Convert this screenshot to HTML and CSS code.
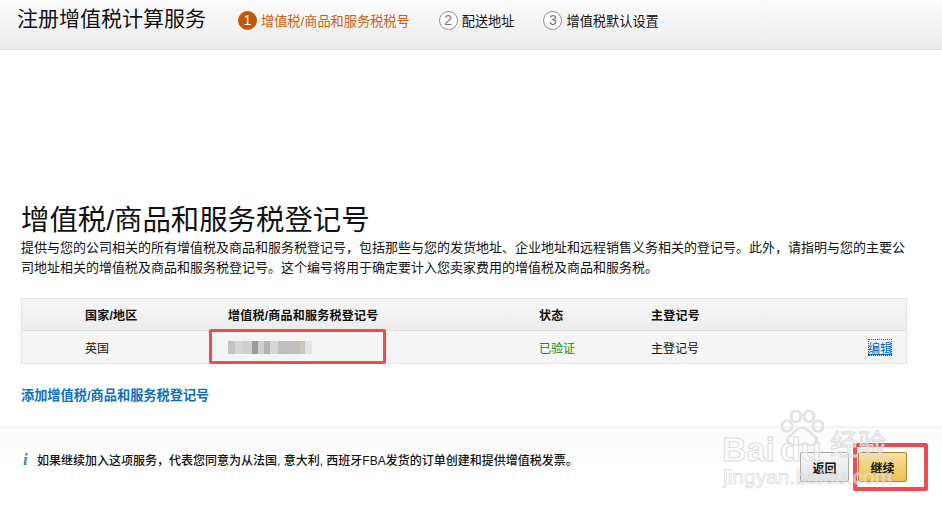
FILE: index.html
```html
<!DOCTYPE html>
<html lang="zh">
<head>
<meta charset="utf-8">
<title>注册增值税计算服务</title>
<link rel="stylesheet" href="styles.css">
</head>
<body>
<header class="top">
  <div class="top-title">注册增值税计算服务</div>
  <ol class="steps">
    <li class="step active"><span class="num">1</span>增值税/商品和服务税税号</li>
    <li class="step"><span class="num">2</span>配送地址</li>
    <li class="step"><span class="num">3</span>增值税默认设置</li>
  </ol>
</header>
<main class="content">
  <h1>增值税/商品和服务税登记号</h1>
  <p class="desc">提供与您的公司相关的所有增值税及商品和服务税登记号，包括那些与您的发货地址、企业地址和远程销售义务相关的登记号。此外，请指明与您的主要公司地址相关的增值税及商品和服务税登记号。这个编号将用于确定要计入您卖家费用的增值税及商品和服务税。</p>
  <div class="table">
    <div class="row head">
      <span>国家/地区</span><span>增值税/商品和服务税登记号</span><span>状态</span><span>主登记号</span><span></span>
    </div>
    <div class="row body">
      <span>英国</span><span><i class="blur"></i></span><span class="ok">已验证</span><span>主登记号</span><a class="edit" href="#">编辑</a>
    </div>
    <div class="mark mark-number"></div>
  </div>
  <a class="add" href="#">添加增值税/商品和服务税登记号</a>
</main>
<footer class="foot">
  <p class="note"><i class="info">i</i>如果继续加入这项服务，代表您同意为从法国, 意大利, 西班牙FBA发货的订单创建和提供增值税发票。</p>
  <div class="actions">
    <button class="btn back">返回</button>
    <button class="btn next">继续</button>
    <div class="mark mark-next"></div>
  </div>
</footer>
<div class="watermark" aria-hidden="true">
  <svg class="paw" width="44" height="40" viewBox="0 0 44 50" preserveAspectRatio="none">
    <g fill="none" stroke="#e2e2e2" stroke-width="3">
      <ellipse cx="7" cy="20" rx="5" ry="7"/>
      <ellipse cx="16" cy="8" rx="5" ry="7"/>
      <ellipse cx="29" cy="8" rx="5" ry="7"/>
      <ellipse cx="38" cy="20" rx="5" ry="7"/>
      <path d="M22 22c-6 0-7 6-12 10-5 5-2 13 5 12 3 0 5-1 7-1s5 1 8 1c6 0 9-7 4-12-5-4-6-10-12-10z"/>
    </g>
  </svg>
  <span class="wm-bai">Bai</span><span class="wm-du">du</span><span class="wm-jy">经验</span>
  <span class="wm-url">jingyan.baidu.com</span>
</div>
</body>
</html>
```
FILE: styles.css
```css
* { box-sizing: border-box; }
html, body { margin: 0; padding: 0; }
body {
  position: relative;
  width: 942px;
  height: 508px;
  overflow: hidden;
  background: #fff;
  color: #111;
  font-family: "Liberation Sans", "Noto Sans CJK SC", sans-serif;
  font-size: 13px;
}
.top {
  display: flex;
  align-items: center;
  height: 50px;
  padding: 0 0 8px 17px;
  background: linear-gradient(#fbfbfb, #ececec);
  border-bottom: 1px solid #d4d4d4;
}
.top-title { font-size: 21px; line-height: 28px; width: 221px; color: #111; margin-top: -3px; }
.steps { display: flex; margin: 0; padding: 0; list-style: none; }
.step { display: flex; align-items: center; font-size: 13.2px; margin-right: 29px; color: #111; }
.step.active { color: #c9620f; }
.num {
  width: 19px;
  height: 19px;
  margin-right: 4px;
  border: 1px solid #8f8f8f;
  border-radius: 50%;
  background: #fff;
  color: #777;
  font-size: 14px;
  line-height: 17px;
  text-align: center;
}
.active .num { background: #c25700; border-color: #c25700; color: #fff; }
.content { padding: 152px 35px 0 21px; }
h1 { margin: 0; font-size: 28.4px; line-height: 36px; font-weight: 400; color: #111; }
.desc { margin: 0; font-size: 13px; line-height: 20px; width: 886px; }
.table {
  position: relative;
  margin-top: 20px;
  width: 886px;
  border: 1px solid #e3e3e3;
}
.row {
  display: grid;
  grid-template-columns: 143px 311px 112px 1fr auto;
  align-items: center;
  padding: 0 14px 0 63px;
  font-size: 12px;
}
.head {
  height: 32px;
  font-weight: 700;
  letter-spacing: .25px;
  background: linear-gradient(#f8f8f8, #ececec);
  border-bottom: 1px solid #dedede;
}
.body { height: 32px; background: #f5f5f5; }
.ok { color: #128c00; }
.edit { color: #0066c0; outline: 1px dotted #0066c0; outline-offset: -1px; }
.blur {
  display: block;
  width: 84px;
  height: 13px;
  background: linear-gradient(90deg,
    #c4c4c8 0 7px, #d6d6d8 7px 14px, #cfcfd1 14px 24px, #9c9a9c 24px 30px,
    #d2cfc9 30px 36px, #b3b3b6 36px 42px, #d6d6d6 42px 50px, #bfbfc3 50px 60px,
    #c2bfc0 60px 72px, #cfc6bb 72px 77px, #dfe5ec 77px 84px);
}
.mark { position: absolute; border: 3px solid #ee4b53; border-radius: 2px; }
.mark-number { left: 187px; top: 30px; width: 177px; height: 35px; }
.add {
  display: block;
  margin-top: 23px;
  font-size: 13.2px;
  line-height: 18px;
  font-weight: 700;
  color: #0a6fc2;
  text-decoration: none;
}
.foot {
  display: flex;
  justify-content: space-between;
  margin-top: 21px;
  height: 82px;
  padding: 26px 35px 0 23px;
  background: linear-gradient(#f1f1f1, #fbfbfb 3px, #fff 40px);
}
.note { margin: 0; font-size: 12px; line-height: 16px; font-weight: 500; color: #111; }
.info {
  display: inline-block;
  width: 14px;
  font-family: "Liberation Serif", serif;
  font-size: 17px;
  font-weight: 700;
  color: #3f88b8;
}
.actions { position: relative; display: flex; gap: 9px; }
.btn {
  width: 49px;
  height: 30px;
  padding: 0;
  border-radius: 2px;
  font: 700 12px "Liberation Sans", "Noto Sans CJK SC", sans-serif;
  color: #111;
}
.back { border: 1px solid #a8a8a8; background: linear-gradient(#f7f8fa, #dfe3e8); }
.next { border: 1px solid #a88734; background: linear-gradient(#f7dfa5, #f0c14b); }
.mark-next { left: 53px; top: -9px; width: 75px; height: 48px; border-width: 4px; }
.watermark {
  position: absolute;
  left: 722px;
  top: 415px;
  width: 170px;
  height: 76px;
  pointer-events: none;
}
.paw { position: absolute; left: 58px; top: -5px; }
.wm-bai, .wm-du {
  position: absolute;
  top: 16px;
  font-size: 34px;
  line-height: 36px;
  font-weight: 700;
  color: rgba(255, 255, 255, .4);
  -webkit-text-stroke: 1px #dcdcdc;
}
.wm-bai { left: 0; }
.wm-du { left: 58px; }
.wm-jy {
  position: absolute;
  left: 108px;
  top: 16px;
  font-size: 28px;
  line-height: 30px;
  color: rgba(255, 255, 255, .4);
  -webkit-text-stroke: 1px #dcdcdc;
}
.wm-url {
  position: absolute;
  left: 1px;
  top: 50px;
  font-size: 21px;
  line-height: 24px;
  color: rgba(255, 255, 255, .35);
  -webkit-text-stroke: .7px #d8d8d8;
}
```
